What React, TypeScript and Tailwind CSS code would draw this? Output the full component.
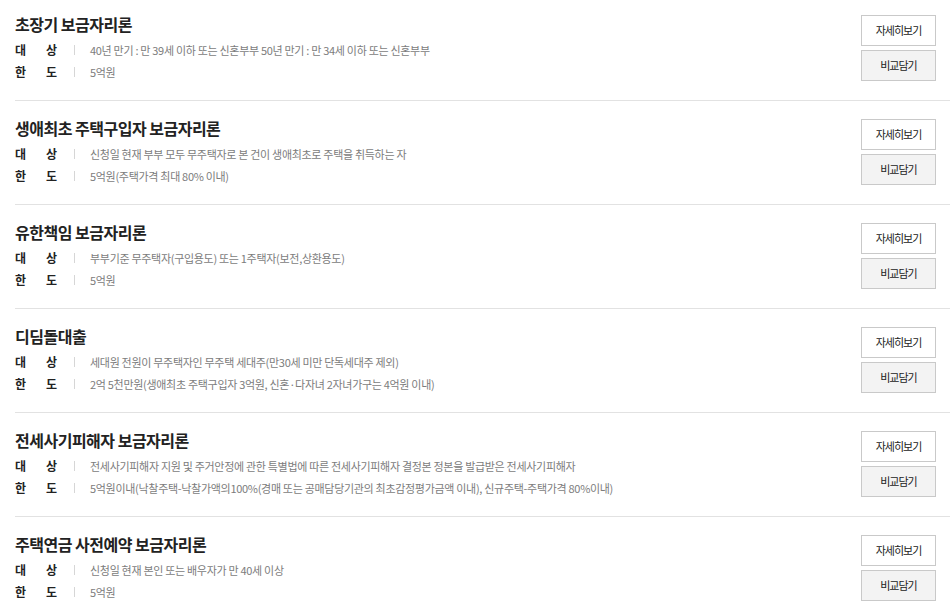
const font = { fontFamily: '"Noto Sans CJK KR", "Noto Sans", sans-serif' }

type Loan = {
  title: string
  target: string
  limit: string
}

const loans: Loan[] = [
  {
    title: "초장기 보금자리론",
    target: "40년 만기 : 만 39세 이하 또는 신혼부부 50년 만기 : 만 34세 이하 또는 신혼부부",
    limit: "5억원",
  },
  {
    title: "생애최초 주택구입자 보금자리론",
    target: "신청일 현재 부부 모두 무주택자로 본 건이 생애최초로 주택을 취득하는 자",
    limit: "5억원(주택가격 최대 80% 이내)",
  },
  {
    title: "유한책임 보금자리론",
    target: "부부기준 무주택자(구입용도) 또는 1주택자(보전,상환용도)",
    limit: "5억원",
  },
  {
    title: "디딤돌대출",
    target: "세대원 전원이 무주택자인 무주택 세대주(만30세 미만 단독세대주 제외)",
    limit: "2억 5천만원(생애최초 주택구입자 3억원, 신혼·다자녀 2자녀가구는 4억원 이내)",
  },
  {
    title: "전세사기피해자 보금자리론",
    target: "전세사기피해자 지원 및 주거안정에 관한 특별법에 따른 전세사기피해자 결정본 정본을 발급받은 전세사기피해자",
    limit: "5억원이내(낙찰주택-낙찰가액의100%(경매 또는 공매담당기관의 최초감정평가금액 이내), 신규주택-주택가격 80%이내)",
  },
  {
    title: "주택연금 사전예약 보금자리론",
    target: "신청일 현재 본인 또는 배우자가 만 40세 이상",
    limit: "5억원",
  },
]

function InfoRow({ a, b, value }: { a: string; b: string; value: string }) {
  return (
    <div className="flex items-center h-[22px]">
      <div className="w-[42px] flex justify-between text-[12px] font-bold text-[#222]">
        <span>{a}</span>
        <span>{b}</span>
      </div>
      <span className="ml-[17px] w-px h-[10px] bg-[#d6d6d6]" />
      <span className="ml-[15px] text-[11px] tracking-[-0.3px] text-[#7c7c7c] whitespace-nowrap">
        {value}
      </span>
    </div>
  )
}

function LoanItem({ loan, first }: { loan: Loan; first: boolean }) {
  return (
    <div
      className={`flex items-start pr-[14px] border-b border-[#e2e2e2] pb-[17px] ${
        first ? "pt-[15px]" : "pt-[18px]"
      }`}
    >
      <div className="flex-1 min-w-0">
        <h3 className="text-[16px] leading-[18px] font-bold tracking-[-0.5px] text-[#222]">
          {loan.title}
        </h3>
        <div className="mt-[6px]">
          <InfoRow a="대" b="상" value={loan.target} />
          <InfoRow a="한" b="도" value={loan.limit} />
        </div>
      </div>
      <div className="w-[75px] flex flex-col gap-[4px]">
        <button className="h-[31px] border border-[#c9c9c9] bg-white text-[11px] tracking-[-1px] text-[#222]">
          자세히보기
        </button>
        <button className="h-[31px] border border-[#c9c9c9] bg-[#f3f3f3] text-[11px] tracking-[-1px] text-[#222]">
          비교담기
        </button>
      </div>
    </div>
  )
}

export default function App() {
  return (
    <div className="w-[950px] h-[607px] overflow-hidden bg-white pl-[15px]" style={font}>
      {loans.map((loan, i) => (
        <LoanItem key={loan.title} loan={loan} first={i === 0} />
      ))}
    </div>
  )
}
